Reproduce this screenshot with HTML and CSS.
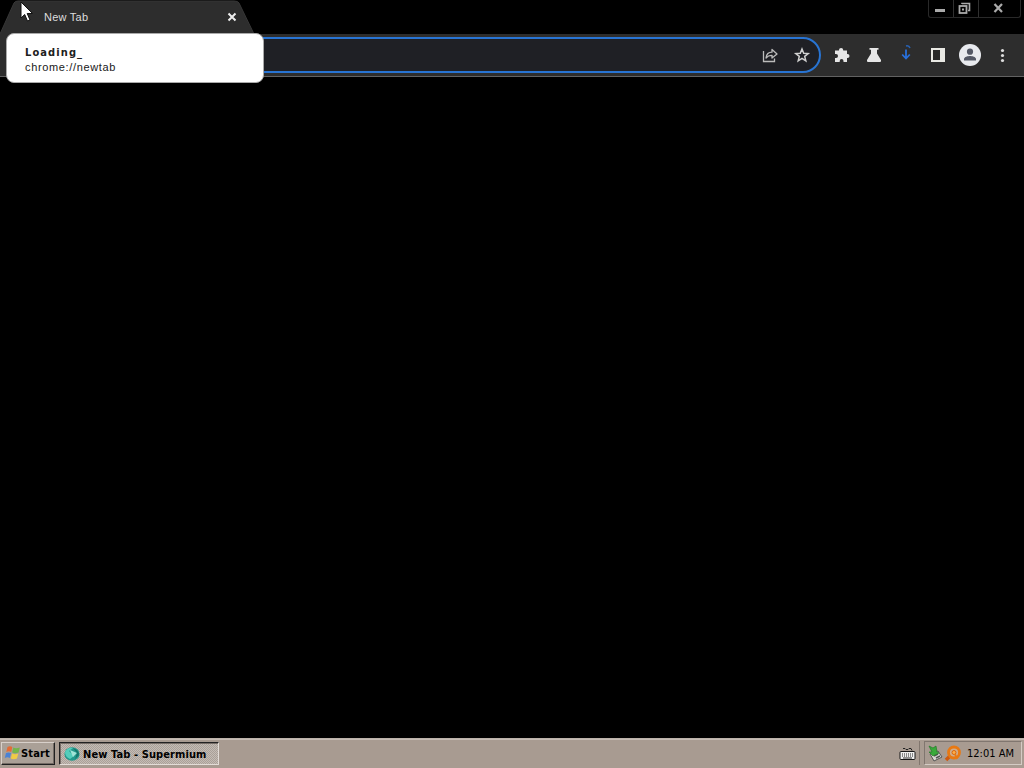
FILE: index.html
```html
<!DOCTYPE html>
<html lang="en">

<head>
    <meta charset="UTF-8">
    <meta name="viewport" content="width=device-width, initial-scale=1.0">
    <title>New Tab</title>
    <link rel="stylesheet" href="styles.css">
</head>

<body>
    <header class="tabstrip">
        <div class="tab">
            <svg class="tab-shape" width="254" height="34" viewBox="0 0 254 34">
                <path d="M0 34 L14 3 Q15 1 18 1 H234 Q238 1 239 3 L254 34 Z" fill="#2d2d2d" />
                <path d="M0 34 L14 3 Q15 1 18 1 H234 Q238 1 239 3 L254 34" fill="none" stroke="#373737" />
            </svg>
            <span class="tab-title">New Tab</span>
            <svg class="tab-close" width="10" height="10" viewBox="0 0 10 10">
                <path d="M1.5 1.5 L8.5 8.5 M8.5 1.5 L1.5 8.5" stroke="#eee" stroke-width="2" />
            </svg>
        </div>
        <div class="controls">
            <div class="control">
                <svg width="24" height="17" viewBox="0 0 24 17">
                    <rect x="6" y="9" width="10" height="3" fill="#aaa" />
                </svg>
            </div>
            <div class="control">
                <svg width="24" height="17" viewBox="0 0 24 17">
                    <path d="M8 4 V3.5 H15.5 V10.5 H14" fill="none" stroke="#aaa" stroke-width="1.6" />
                    <rect x="5.5" y="6" width="7" height="7" fill="#000" stroke="#aaa" stroke-width="1.8" />
                    <rect x="8" y="8.5" width="2" height="2" fill="#aaa" />
                </svg>
            </div>
            <div class="control control-wide">
                <svg width="40" height="17" viewBox="0 0 40 17">
                    <path d="M15.5 4 L23 12 M23 4 L15.5 12" stroke="#aaa" stroke-width="2.2" />
                </svg>
            </div>
        </div>
    </header>

    <nav class="toolbar">
        <div class="omnibox">
            <svg width="20" height="20" viewBox="0 0 20 20">
                <path d="M3.5 6 V16.5 H14.5 V13.5" fill="none" stroke="#bbb" stroke-width="1.3" />
                <path d="M6 13 C6.5 9 8.5 7.2 12 7.2 V4.5 L17 9 L12 13 V10.3 C9.4 10.3 7.5 11 6 13 Z" fill="none" stroke="#bbb" stroke-width="1.3" stroke-linejoin="round" />
            </svg>
            <svg width="20" height="20" viewBox="0 0 20 20">
                <path d="M10 4 L11.7 8.2 L16.2 8.5 L12.7 11.4 L13.8 15.8 L10 13.4 L6.2 15.8 L7.3 11.4 L3.8 8.5 L8.3 8.2 Z" fill="none" stroke="#d0d0d0" stroke-width="1.5" />
            </svg>
        </div>
        <div class="actions">
            <svg width="20" height="20" viewBox="0 0 20 20">
                <path d="M3 5.5 H7 V5 A2.1 2.1 0 0 1 11.2 5 V5.5 H15 V9 H15.5 A2 2 0 0 1 15.5 13 H15 V17 H11.5 V16 A1.9 1.9 0 0 0 7.7 16 V17 H3 V13 H4 A2 2 0 0 0 4 9 H3 Z" fill="#e6e6e6" />
            </svg>
            <svg width="20" height="20" viewBox="0 0 20 20">
                <path d="M5.5 3 H14.5 V4.8 H13 V8.5 L17 15 Q17.5 17 16 17 H4 Q2.5 17 3 15 L7 8.5 V4.8 H5.5 Z" fill="#e6e6e6" />
            </svg>
            <svg width="20" height="20" viewBox="0 0 20 20">
                <path d="M10 4.5 V13.5 M6.2 9.5 L10 13.5 L13.8 9.5" fill="none" stroke="#2870dc" stroke-width="1.8" />
                <path d="M10 1 Q13 .3 14 3" fill="none" stroke="#2862b4" stroke-width="1.5" />
            </svg>
            <svg width="20" height="20" viewBox="0 0 20 20">
                <rect x="3" y="3" width="14" height="14" fill="#e9e9e4" />
                <rect x="5" y="5" width="7" height="10" fill="#292929" />
            </svg>
            <svg class="avatar" width="22" height="22" viewBox="0 0 22 22">
                <circle cx="11" cy="11" r="11" fill="#e8eaee" />
                <circle cx="11" cy="7.7" r="3.1" fill="#535865" />
                <path d="M5 16.5 V15 C5 12.7 9 11.9 11 11.9 S17 12.7 17 15 V16.5 Z" fill="#535865" />
            </svg>
            <svg width="20" height="20" viewBox="0 0 20 20" fill="#ddd">
                <circle cx="10.5" cy="5.5" r="1.6" />
                <circle cx="10.5" cy="10.5" r="1.6" />
                <circle cx="10.5" cy="15.5" r="1.6" />
            </svg>
        </div>
    </nav>

    <main class="page"></main>

    <footer class="taskbar">
        <button class="start">
            <svg width="17" height="16" viewBox="0 0 17 16">
                <path d="M3.5 2 Q6 .5 8.3 2 L7.2 7 Q5 5.7 2.3 7 Z" fill="#e56b35" />
                <path d="M9.3 2.5 Q12 4 15.8 2.5 L14.6 7.5 Q11 9 8.2 7.5 Z" fill="#73b54b" />
                <path d="M2 8 Q4.5 6.8 7 8 L5.8 13 Q3.5 11.6 .8 13 Z" fill="#4b82d4" />
                <path d="M8 8.5 Q11 10 14.3 8.5 L13 13.5 Q9.5 15 6.8 13.5 Z" fill="#f0cb45" />
            </svg>
            <span>Start</span>
        </button>
        <button class="task">
            <svg width="16" height="16" viewBox="0 0 16 16">
                <ellipse cx="8" cy="8" rx="7.6" ry="6.8" fill="#23988c" />
                <path d="M1 6 Q4 1 9 2 L5 5 L10 10 L6 13 Q1 11 1 6 Z" fill="#54cdbb" />
                <path d="M6 4 L13 7 L9 11 Z" fill="#a0e4d6" />
                <path d="M9 2 Q15 4 15 9 L11 13 L13 7 Z" fill="#167569" />
            </svg>
            <span>New Tab - Supermium</span>
        </button>
        <div class="keyboard">
            <svg width="17" height="16" viewBox="0 0 17 16">
                <path d="M4 2.5 H6 L7 3.5 H9 L10 2.5 H12 L13 4.5" fill="none" stroke="#222" />
                <rect x="1" y="5.5" width="15" height="8" rx="1" fill="#eee" stroke="#171717" />
                <path d="M3 8 H14 M3 10 H14" stroke="#222" stroke-dasharray="1 1" />
                <path d="M4 12 H13" stroke="#333" />
            </svg>
        </div>
        <div class="tray">
            <svg width="16" height="17" viewBox="0 0 16 17">
                <path d="M3 9 L11 6 L15 12 L7 16 Z" fill="#d9d9d3" stroke="#555" />
                <path d="M7 11 L11 9 M9 13 L13 11" stroke="#555" stroke-width="1.5" />
                <path d="M2 1 L6 3 L9 1 L10 7 L12 8 L6 11 L2 7 L5 7 Z" fill="#39aa3b" stroke="#247b28" stroke-width=".7" />
            </svg>
            <svg width="18" height="17" viewBox="0 0 18 17">
                <path d="M6 11 L2 15" stroke="#ce5a10" stroke-width="3.5" />
                <circle cx="10" cy="7.5" r="5.5" fill="#cfad8d" stroke="#e87913" stroke-width="2.8" />
                <circle cx="10" cy="7.5" r="2" fill="#ffad45" stroke="#d7650f" />
                <path d="M11 9 L13 14" stroke="#e87913" stroke-width="2" />
            </svg>
            <span class="clock">12:01 AM</span>
        </div>
    </footer>

    <div class="tooltip">
        <div class="tooltip-title">Loading_</div>
        <div class="tooltip-url">chrome://newtab</div>
    </div>

    <svg class="cursor" width="14" height="22" viewBox="0 0 14 22">
        <path d="M1 1 V17 L4.7 13.5 L7.5 20 L10 19 L7.2 12.5 H12.5 Z" fill="#fff" stroke="#111" />
    </svg>
</body>

</html>
```
FILE: styles.css
```css
* {
    box-sizing: border-box;
}

body {
    display: flex;
    flex-direction: column;
    height: 100vh;
    margin: 0;
    overflow: hidden;
    background: #000;
    font-family: "DejaVu Sans Condensed", "DejaVu Sans", sans-serif;
    font-size: 11px;
}

svg {
    display: block;
    flex: none;
}

.tabstrip {
    display: flex;
    justify-content: space-between;
    height: 34px;
}

.tab {
    position: relative;
    display: flex;
    align-items: center;
    justify-content: space-between;
    width: 254px;
    padding: 0 17px 0 44px;
    color: #ddd;
}

.tab-shape {
    position: absolute;
    left: 0;
    top: 0;
}

.tab-title,
.tab-close {
    position: relative;
}

.tab-title {
    font-family: "Liberation Sans", Arial, sans-serif;
    letter-spacing: .25px;
}

.controls {
    display: flex;
    height: 18px;
    margin-right: 3px;
    border: 1px solid #292929;
    border-top: 0;
    border-radius: 0 0 3px 3px;
}

.control {
    width: 25px;
    overflow: hidden;
    border-right: 1px solid #303030;
}

.control-wide {
    width: 41px;
    border-right: 0;
}

.toolbar {
    display: flex;
    align-items: center;
    height: 43px;
    background: #2d2d2d;
    border-bottom: 1px solid #626262;
}

.omnibox {
    display: flex;
    align-items: center;
    justify-content: flex-end;
    gap: 12px;
    width: 715px;
    height: 36px;
    margin-left: 106px;
    padding-right: 7px;
    background: #1f2025;
    border: 2px solid #2874d3;
    border-radius: 18px;
}

.actions {
    display: flex;
    align-items: center;
    gap: 12px;
    margin-left: 11px;
}

.avatar {
    margin: 0 -1px;
}

.page {
    flex: 1;
}

.taskbar {
    display: flex;
    align-items: center;
    height: 30px;
    padding: 0 2px 1px 1px;
    background: #a89b91;
    border-top: 1px solid #bcb2aa;
    box-shadow: inset 0 1px #c5bbb4;
}

button {
    display: flex;
    align-items: center;
    height: 23px;
    font-family: inherit;
    font-size: 11px;
    font-weight: bold;
    white-space: nowrap;
    color: #000;
}

.start {
    width: 54px;
    padding: 0 0 0 2px;
    letter-spacing: .15px;
    background: #aaa097;
    border: 1px solid;
    border-color: #d8d0ca #222 #222 #d8d0ca;
    box-shadow: inset -1px -1px #746b65;
}

.task {
    width: 160px;
    gap: 3px;
    margin-left: 4px;
    padding: 1px 0 0 4px;
    letter-spacing: .1px;
    background: repeating-conic-gradient(#aaa098 0 25%, #c4bcb5 0 50%) 0 0 / 2px 2px;
    border: 1px solid;
    border-color: #222 #e3dcd7 #e3dcd7 #222;
    box-shadow: inset 1px 1px #756c66;
}

.task span {
    padding-top: 2px;
}

.keyboard {
    margin-left: auto;
    padding: 2px 8px 0 0;
}

.tray {
    display: flex;
    align-items: center;
    width: 98px;
    height: 24px;
    padding-left: 2px;
    gap: 1px;
    border: 1px solid;
    border-color: #80766f #d4cbc4 #d4cbc4 #80766f;
    box-shadow: -4px 0 #a89b91, -5px 0 #81766e;
}

.clock {
    margin-left: 4px;
    padding-top: 1px;
    white-space: nowrap;
}

.tooltip {
    position: absolute;
    left: 6px;
    top: 33px;
    width: 258px;
    height: 50px;
    padding: 12px 18px;
    background: #fff;
    border: 1px solid #aaa;
    border-radius: 8px;
    color: #202020;
}

.tooltip-title {
    height: 13px;
    font-weight: bold;
    letter-spacing: 1.1px;
    line-height: 14px;
}

.tooltip-url {
    font-family: "Liberation Sans", Arial, sans-serif;
    letter-spacing: .65px;
    line-height: 16px;
}

.cursor {
    position: absolute;
    left: 20px;
    top: 1px;
}
```
